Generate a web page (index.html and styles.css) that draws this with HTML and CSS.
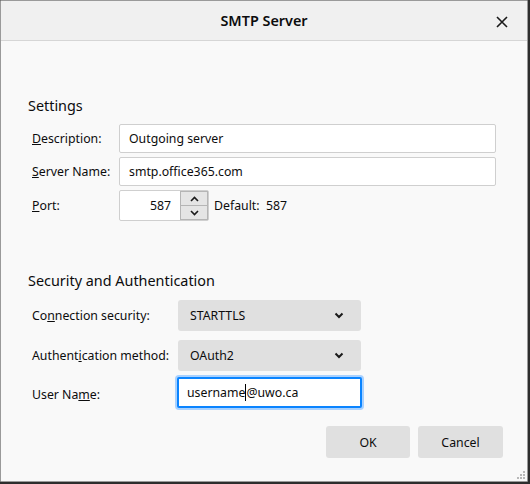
FILE: index.html
```html
<!DOCTYPE html>
<html lang="en">
    <head>
        <meta charset="UTF-8">
        <title>SMTP Server</title>
        <link rel="stylesheet" href="styles.css">
    </head>
    <body>
    <div class="dialog">
        <div class="titlebar">
            <span class="title">SMTP Server</span>
            <span class="close">
                <svg width="12" height="12" viewBox="0 0 12 12"><path d="M1 1 L11 11 M11 1 L1 11" stroke="#1a1a1a" stroke-width="1.6"/></svg>
            </span>
        </div>
        <div class="content">
            <div class="group settings">
                <h2 class="group-title">Settings</h2>
                <div class="form settings-form">
                    <label class="label"><u>D</u>escription:</label>
                    <div class="text-input">Outgoing server</div>
                    <label class="label"><u>S</u>erver Name:</label>
                    <div class="text-input">smtp.office365.com</div>
                    <label class="label"><u>P</u>ort:</label>
                    <div class="port-row">
                        <div class="port-input">
                            <span class="port-value">587</span>
                            <span class="spinner">
                                <span class="spin-btn">
                                    <svg width="9" height="6" viewBox="0 0 9 6"><path d="M1 5 L4.5 1.5 L8 5" fill="none" stroke="#1a1a1a" stroke-width="1.6"/></svg>
                                </span>
                                <span class="spin-btn">
                                    <svg width="9" height="6" viewBox="0 0 9 6"><path d="M1 1 L4.5 4.5 L8 1" fill="none" stroke="#1a1a1a" stroke-width="1.6"/></svg>
                                </span>
                            </span>
                        </div>
                        <span class="default-text">Default:&nbsp; 587</span>
                    </div>
                </div>
            </div>
            <div class="group security">
                <h2 class="group-title">Security and Authentication</h2>
                <div class="form security-form">
                    <label class="label">Co<u>n</u>nection security:</label>
                    <div class="select">
                        <span>STARTTLS</span>
                        <svg width="10" height="7" viewBox="0 0 10 7"><path d="M1.5 1.5 L5 5 L8.5 1.5" fill="none" stroke="#1a1a1a" stroke-width="2"/></svg>
                    </div>
                    <label class="label">Authent<u>i</u>cation method:</label>
                    <div class="select">
                        <span>OAuth2</span>
                        <svg width="10" height="7" viewBox="0 0 10 7"><path d="M1.5 1.5 L5 5 L8.5 1.5" fill="none" stroke="#1a1a1a" stroke-width="2"/></svg>
                    </div>
                    <label class="label">User Na<u>m</u>e:</label>
                    <div class="text-input focused">username<span class="caret"></span>@uwo.ca</div>
                </div>
            </div>
        </div>
        <div class="buttons">
            <button class="btn">OK</button>
            <button class="btn">Cancel</button>
        </div>
        <svg class="grip" width="10" height="10" viewBox="0 0 10 10">
            <rect x="7" y="1" width="2" height="2" fill="#b8b8b8"/>
            <rect x="4" y="4" width="2" height="2" fill="#b8b8b8"/>
            <rect x="7" y="4" width="2" height="2" fill="#b8b8b8"/>
            <rect x="1" y="7" width="2" height="2" fill="#b8b8b8"/>
            <rect x="4" y="7" width="2" height="2" fill="#b8b8b8"/>
            <rect x="7" y="7" width="2" height="2" fill="#b8b8b8"/>
        </svg>
    </div>
    </body>
</html>
```

FILE: styles.css
```css
body {
    margin: 0;
    background: #2d2d2d;
    font-family: "Noto Sans", "Open Sans", sans-serif;
    font-size: 12.3px;
    color: #0c0c0d;
}
.dialog {
    width: 528px;
    height: 482px;
    box-sizing: border-box;
    border: 1px solid #9a9a9a;
    border-radius: 1px;
    background: #f9f9f9;
    position: relative;
}
.titlebar {
    height: 39px;
    background: #f0f0f0;
    border-bottom: 1px solid #d6d6d6;
    display: flex;
    align-items: center;
    justify-content: center;
    position: relative;
}
.title {
    font-size: 14.4px;
    font-weight: 600;
}
.close {
    position: absolute;
    right: 19px;
    top: 15px;
    display: flex;
}
.content {
    padding: 55px 31px 0 27px;
}
.group-title {
    font-size: 14.4px;
    font-weight: 400;
    margin: 0;
    line-height: 20px;
}
.form {
    display: grid;
    align-items: center;
}
.settings-form {
    margin-top: 8px;
    grid-template-columns: 91px 1fr;
    row-gap: 4px;
}
.label {
    padding-left: 4px;
    white-space: nowrap;
}
.text-input {
    height: 29px;
    box-sizing: border-box;
    border: 1px solid #cfcfcf;
    border-radius: 2px;
    background: #fff;
    padding: 0 9px;
    display: flex;
    align-items: center;
}
.port-row {
    display: flex;
    align-items: center;
}
.port-input {
    width: 90px;
    height: 31px;
    box-sizing: border-box;
    border: 1px solid #cfcfcf;
    border-radius: 2px;
    background: #fff;
    display: flex;
    align-items: center;
    justify-content: flex-end;
}
.port-value {
    margin-right: 9px;
}
.spinner {
    width: 28px;
    height: 29px;
    box-sizing: border-box;
    border: 1px solid #b5b5b5;
    display: flex;
    flex-direction: column;
}
.spin-btn {
    flex: 1;
    background: #e5e5e5;
    display: flex;
    align-items: center;
    justify-content: center;
}
.spin-btn + .spin-btn {
    border-top: 1px solid #b5b5b5;
}
.default-text {
    margin-left: 5px;
}
.security {
    margin-top: 50px;
}
.security-form {
    margin-top: 9px;
    grid-template-columns: 150px 183px;
    row-gap: 9px;
}
.select {
    height: 31px;
    background: #e0e0e0;
    border-radius: 3px;
    display: flex;
    align-items: center;
    justify-content: space-between;
    padding: 0 17px 0 12px;
}
.text-input.focused {
    height: 31px;
    margin: -3px 0 0 -1px;
    width: 185px;
    border: 2px solid #0a84ff;
    box-shadow: 0 0 0 2px #a8d1ff;
    padding: 0 8px;
}
.caret {
    display: inline-block;
    width: 1px;
    height: 17px;
    background: #000;
}
.buttons {
    display: flex;
    justify-content: flex-end;
    gap: 8px;
    padding: 18px 24px 0 0;
}
.btn {
    height: 32px;
    width: 84px;
    border: none;
    border-radius: 3px;
    background: #e0e0e0;
    font-family: inherit;
    font-size: 12.3px;
    color: #0c0c0d;
}
.btn + .btn {
    width: 85px;
}
.grip {
    position: absolute;
    right: 1px;
    bottom: 1px;
}
```
